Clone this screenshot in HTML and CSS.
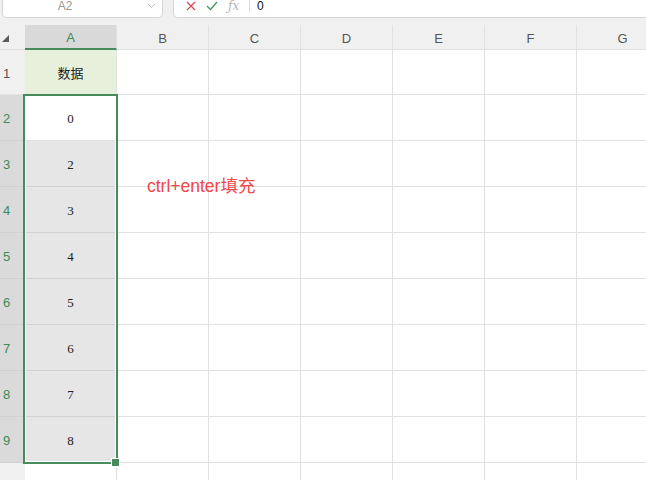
FILE: index.html
```html
<!DOCTYPE html>
<html lang="zh">
<head>
<meta charset="UTF-8">
<title>ctrl+enter填充</title>
<link rel="stylesheet" href="styles.css">
</head>
<body>

<div class="toolbar">
    <div class="name-box">
        <span class="name-text">A2</span>
        <svg class="chevron" width="9" height="6" viewBox="0 0 9 6"><path d="M1 1 L4.5 4.5 L8 1" fill="none" stroke="#c8c8c8" stroke-width="1"/></svg>
    </div>
    <div class="formula-box">
        <svg class="fb-icon" width="10" height="10" viewBox="0 0 10 10"><path d="M1 1 L9 9 M9 1 L1 9" stroke="#e0494f" stroke-width="1.3" fill="none"/></svg>
        <svg class="fb-icon" width="12" height="10" viewBox="0 0 12 10"><path d="M1 5 L4.5 8.5 L11 1" stroke="#3e9a62" stroke-width="1.3" fill="none"/></svg>
        <span class="fx">ƒx</span>
        <span class="fb-divider"></span>
        <span class="fb-value">0</span>
    </div>
</div>

<div class="sheet">
    <div class="grid">
        <!-- 表头 -->
        <div class="corner"><svg width="8" height="8" viewBox="0 0 8 8"><path d="M7 0 L7 7 L0 7 Z" fill="#5a5a5a"/></svg></div>
        <div class="col-head active">A</div>
        <div class="col-head">B</div>
        <div class="col-head">C</div>
        <div class="col-head">D</div>
        <div class="col-head">E</div>
        <div class="col-head">F</div>
        <div class="col-head">G</div>

        <div class="row-head">1</div>
        <div class="cell title">数据</div>
        <div class="cell"></div><div class="cell"></div><div class="cell"></div><div class="cell"></div><div class="cell"></div><div class="cell"></div>

        <div class="row-head sel">2</div>
        <div class="cell num current">0</div>
        <div class="cell"></div><div class="cell"></div><div class="cell"></div><div class="cell"></div><div class="cell"></div><div class="cell"></div>

        <div class="row-head sel">3</div>
        <div class="cell num picked">2</div>
        <div class="cell"></div><div class="cell"></div><div class="cell"></div><div class="cell"></div><div class="cell"></div><div class="cell"></div>

        <div class="row-head sel">4</div>
        <div class="cell num picked">3</div>
        <div class="cell"></div><div class="cell"></div><div class="cell"></div><div class="cell"></div><div class="cell"></div><div class="cell"></div>

        <div class="row-head sel">5</div>
        <div class="cell num picked">4</div>
        <div class="cell"></div><div class="cell"></div><div class="cell"></div><div class="cell"></div><div class="cell"></div><div class="cell"></div>

        <div class="row-head sel">6</div>
        <div class="cell num picked">5</div>
        <div class="cell"></div><div class="cell"></div><div class="cell"></div><div class="cell"></div><div class="cell"></div><div class="cell"></div>

        <div class="row-head sel">7</div>
        <div class="cell num picked">6</div>
        <div class="cell"></div><div class="cell"></div><div class="cell"></div><div class="cell"></div><div class="cell"></div><div class="cell"></div>

        <div class="row-head sel">8</div>
        <div class="cell num picked">7</div>
        <div class="cell"></div><div class="cell"></div><div class="cell"></div><div class="cell"></div><div class="cell"></div><div class="cell"></div>

        <div class="row-head sel">9</div>
        <div class="cell num picked">8</div>
        <div class="cell"></div><div class="cell"></div><div class="cell"></div><div class="cell"></div><div class="cell"></div><div class="cell"></div>

        <div class="row-head"></div>
        <div class="cell"></div><div class="cell"></div><div class="cell"></div><div class="cell"></div><div class="cell"></div><div class="cell"></div><div class="cell"></div>
    </div>

    <!-- 选区边框 -->
    <div class="selection"><div class="fill-handle"></div></div>

    <div class="note">ctrl+enter填充</div>
</div>

</body>
</html>
```

FILE: styles.css
```css
body {
    margin: 0;
    padding: 0;
    width: 646px;
    height: 480px;
    overflow: hidden;
    background-color: #f0f0f0;
    font-family: "Liberation Sans", Arial, sans-serif;
    color: #333;
}

.toolbar {
    display: flex;
    height: 25px;
    gap: 10px;
    padding-left: 2px;
}

.name-box,
.formula-box {
    height: 18px;
    box-sizing: border-box;
    background-color: #ffffff;
    border: 1px solid #d6d6d6;
    border-top: none;
    border-radius: 0 0 5px 5px;
    display: flex;
    align-items: flex-start;
    padding-top: 0;
}

.name-box {
    width: 161px;
}

.name-text {
    flex: 1;
    text-align: center;
    padding-right: 20px;
    font-size: 12px;
    line-height: 12px;
    color: #9a9a9a;
}

.chevron {
    margin: 3px 6px 0 0;
}

.formula-box {
    flex: 1;
    margin-right: -12px;
    padding-left: 12px;
    border-radius: 0 0 0 5px;
}

.fb-icon {
    margin: 1px 10px 0 0;
}

.fx {
    font-family: "DejaVu Serif", serif;
    font-style: italic;
    font-size: 12px;
    line-height: 13px;
    color: #b5b5b5;
    width: 18px;
}

.fb-divider {
    width: 1px;
    height: 12px;
    background-color: #dcdcdc;
    margin: 0 7px 0 3px;
}

.fb-value {
    font-size: 12px;
    line-height: 12px;
    color: #111;
}

/* 表格区域 */
.sheet {
    position: relative;
    background-color: #ffffff;
}

.grid {
    display: grid;
    grid-template-columns: 25px repeat(7, 92px);
    grid-template-rows: 25px 45px repeat(9, 46px);
}

.grid > div {
    box-sizing: border-box;
    border-right: 1px solid #e1e1e1;
    border-bottom: 1px solid #e1e1e1;
    display: flex;
    align-items: center;
    justify-content: center;
}

.corner {
    background-color: #f0f0f0;
    padding: 4px 0 0 2px;
}

.grid > .corner {
    border-right: none;
    justify-content: flex-start;
}

.col-head {
    background-color: #f0f0f0;
    font-size: 13px;
    color: #555;
    padding-top: 2px;
}

.col-head.active {
    background-color: #d9d9d9;
    color: #3f8a58;
    border-bottom: 2px solid #458b5c;
}

.grid > .row-head {
    background-color: #f0f0f0;
    justify-content: flex-start;
    padding: 2px 0 0 3px;
    font-size: 13px;
    color: #555;
    border-right: none;
}

.grid > .row-head.sel {
    background-color: #dadada;
    color: #3f8a58;
    border-bottom-color: #d0d0d0;
}

.title {
    background-color: #e6f0da;
    font-family: "Noto Sans CJK SC", sans-serif;
    font-size: 13px;
    color: #222;
}

.num {
    font-family: "Liberation Serif", "Times New Roman", serif;
    font-size: 13px;
    color: #222;
    padding-top: 2px;
}

.grid > .picked {
    background-color: #e6e6e6;
    border-bottom-color: #d2d2d2;
}

.selection {
    position: absolute;
    left: 23px;
    top: 69px;
    width: 95px;
    height: 370px;
    box-sizing: border-box;
    border: 2px solid #458b5c;
    box-shadow: inset 0 0 0 1px #ffffff;
}

.fill-handle {
    position: absolute;
    right: -4px;
    bottom: -5px;
    width: 7px;
    height: 7px;
    background-color: #458b5c;
    border: 1px solid #ffffff;
}

.note {
    position: absolute;
    left: 147px;
    top: 147px;
    font-family: "Liberation Sans", "Noto Sans CJK SC", sans-serif;
    font-size: 17.5px;
    color: #f0474a;
}
```
